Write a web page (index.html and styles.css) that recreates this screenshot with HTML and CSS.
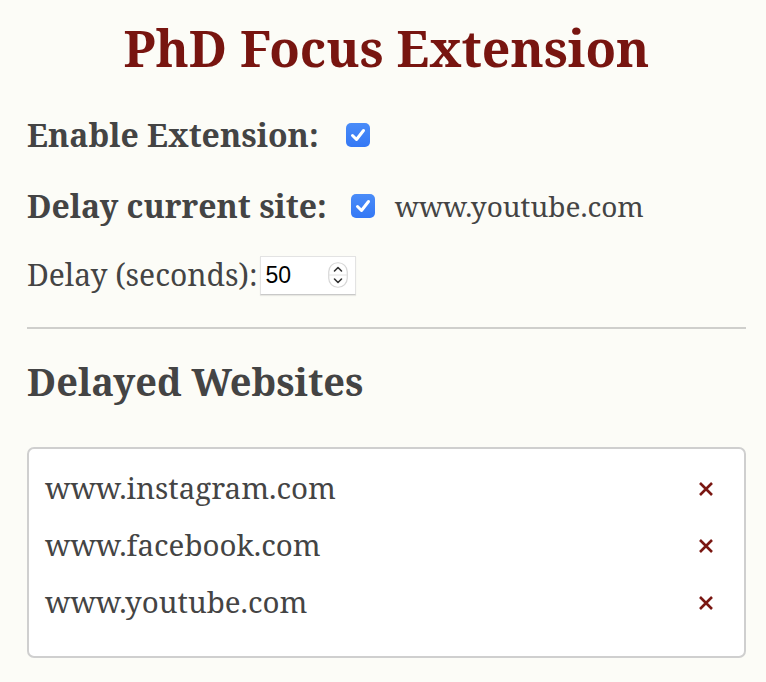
FILE: index.html
```html
<!DOCTYPE html>
<html lang="en">
<head>
<meta charset="utf-8">
<title>PhD Focus Extension</title>
<link rel="stylesheet" href="styles.css">
</head>
<body>
<main class="popup">
  <h1 class="title">PhD Focus Extension</h1>

  <div class="row row-enable">
    <span class="label-bold">Enable Extension:</span>
    <span class="check" role="checkbox" aria-checked="true">
      <svg viewBox="0 0 24 24" width="24" height="24"><polyline points="6.5,12.5 10.5,16.5 17.5,7.5" fill="none" stroke="#fff" stroke-width="3" stroke-linecap="round" stroke-linejoin="round"/></svg>
    </span>
  </div>

  <div class="row row-current">
    <span class="label-bold">Delay current site:</span>
    <span class="check" role="checkbox" aria-checked="true">
      <svg viewBox="0 0 24 24" width="24" height="24"><polyline points="6.5,12.5 10.5,16.5 17.5,7.5" fill="none" stroke="#fff" stroke-width="3" stroke-linecap="round" stroke-linejoin="round"/></svg>
    </span>
    <span class="current-site">www.youtube.com</span>
  </div>

  <div class="row row-delay">
    <span class="label">Delay (seconds):</span>
    <span class="number-input">
      <span class="number-value">50</span>
      <span class="spinner">
        <svg viewBox="0 0 20 26" width="20" height="26">
          <rect x="0.75" y="0.75" width="18.5" height="24.5" rx="9" fill="#fff" stroke="#d6d6d6" stroke-width="1.2"/>
          <line x1="1" y1="13" x2="19" y2="13" stroke="#e2e2e2" stroke-width="1"/>
          <polyline points="6.5,9 10,5.5 13.5,9" fill="none" stroke="#333" stroke-width="1.6" stroke-linecap="round" stroke-linejoin="round"/>
          <polyline points="6.5,17 10,20.5 13.5,17" fill="none" stroke="#333" stroke-width="1.6" stroke-linecap="round" stroke-linejoin="round"/>
        </svg>
      </span>
    </span>
  </div>

  <hr class="divider">

  <h2 class="section-title">Delayed Websites</h2>

  <ul class="site-list">
    <li class="site-item"><span>www.instagram.com</span><span class="remove"><svg viewBox="0 0 16 16" width="16" height="16"><path d="M2 2L14 14M14 2L2 14" stroke="#7a1712" stroke-width="2.6" stroke-linecap="butt"/></svg></span></li>
    <li class="site-item"><span>www.facebook.com</span><span class="remove"><svg viewBox="0 0 16 16" width="16" height="16"><path d="M2 2L14 14M14 2L2 14" stroke="#7a1712" stroke-width="2.6" stroke-linecap="butt"/></svg></span></li>
    <li class="site-item"><span>www.youtube.com</span><span class="remove"><svg viewBox="0 0 16 16" width="16" height="16"><path d="M2 2L14 14M14 2L2 14" stroke="#7a1712" stroke-width="2.6" stroke-linecap="butt"/></svg></span></li>
  </ul>
</main>
</body>
</html>
```
FILE: styles.css
```css
html, body {
  margin: 0;
  padding: 0;
  background: #fcfcf7;
}

body {
  font-family: "Noto Serif", "DejaVu Serif", serif;
  color: #444;
}

.popup {
  width: 719px;
  padding: 18px 0 0 27px;
}

.title {
  margin: 0;
  height: 60px;
  line-height: 60px;
  font-size: 50px;
  font-weight: bold;
  color: #781510;
  text-align: center;
  white-space: nowrap;
}

.row {
  display: flex;
  align-items: center;
  height: 40px;
}

.row-enable {
  margin-top: 37px;
}

.row-current {
  margin-top: 31px;
}

.row-delay {
  margin-top: 29px;
}

.label-bold {
  font-size: 32px;
  font-weight: bold;
  line-height: 40px;
  white-space: nowrap;
}

.label {
  font-size: 30px;
  line-height: 40px;
  white-space: nowrap;
}

.check {
  display: inline-flex;
  width: 24px;
  height: 24px;
  border-radius: 5px;
  background: linear-gradient(#4a8cf8, #3478f5);
  margin-left: 27px;
  flex: none;
}

.row-current .check {
  margin-left: 24px;
}

.current-site {
  margin-left: 20px;
  font-size: 28px;
  line-height: 40px;
  white-space: nowrap;
}

.number-input {
  display: inline-flex;
  align-items: center;
  justify-content: space-between;
  box-sizing: border-box;
  width: 96px;
  height: 39px;
  margin-left: 2px;
  padding: 0 7px 0 5px;
  background: #fff;
  border: 1px solid #e3e3e3;
  border-bottom-color: #c9c9c9;
  box-shadow: 0 1px 1px rgba(0, 0, 0, 0.08);
}

.number-value {
  font-family: "Liberation Sans", Arial, sans-serif;
  font-size: 23px;
  color: #000;
}

.spinner {
  display: inline-flex;
}

.divider {
  margin: 32px 0 0;
  border: 0;
  border-top: 2px solid #cfcfcc;
  height: 0;
}

.section-title {
  margin: 30px 0 0;
  font-size: 38px;
  line-height: 44px;
  font-weight: bold;
  white-space: nowrap;
}

.site-list {
  list-style: none;
  margin: 44px 0 0;
  box-sizing: border-box;
  height: 211px;
  padding: 19px 30px 0 16px;
  background: #fff;
  border: 2px solid #cfcfcf;
  border-radius: 7px;
  display: flex;
  flex-direction: column;
  gap: 17px;
}

.site-item {
  display: flex;
  align-items: center;
  justify-content: space-between;
  height: 40px;
  font-size: 29.5px;
  line-height: 40px;
  white-space: nowrap;
}

.remove {
  display: inline-flex;
  margin-top: 2px;
}
```
